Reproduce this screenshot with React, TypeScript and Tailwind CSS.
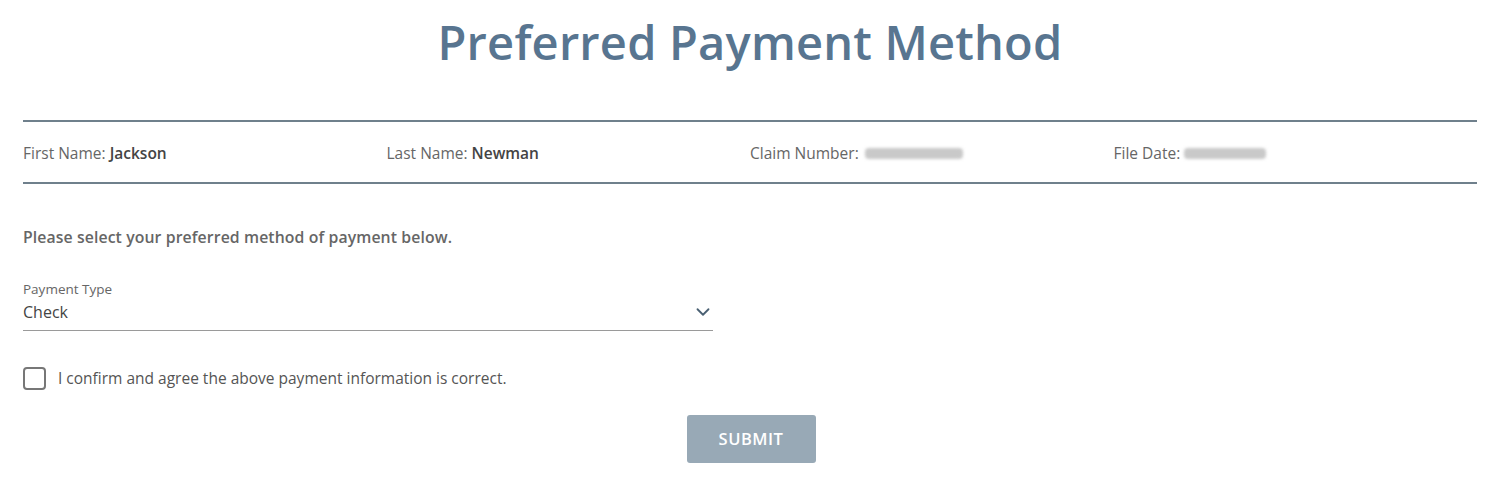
import { ChevronDown } from "lucide-react";

function Blurred({ w }: { w: number }) {
  return (
    <span className="inline-flex items-center align-middle" style={{ width: w }}>
      <span className="h-[11px] w-full bg-[#c9c9c9] blur-[1.5px] rounded-sm" />
    </span>
  );
}

export default function App() {
  return (
    <div className="min-h-[479px] bg-white px-[23px] font-['Open_Sans',sans-serif] text-[#555]">
      <h1 className="pt-[12px] text-center text-[47px] leading-[60px] font-semibold text-[#587590] tracking-[0.2px]">
        Preferred Payment Method
      </h1>

      <div className="mt-[48px] border-y-2 border-[#6f808c] h-[64px] pt-[3px] grid grid-cols-4 items-center text-[15.5px]">
        <div>
          <span className="text-[#666]">First Name: </span>
          <span className="font-semibold text-[#444]">Jackson</span>
        </div>
        <div>
          <span className="text-[#666]">Last Name: </span>
          <span className="font-semibold text-[#444]">Newman</span>
        </div>
        <div className="flex items-center">
          <span className="text-[#666] mr-[6px]">Claim Number:</span>
          <Blurred w={98} />
        </div>
        <div className="flex items-center">
          <span className="text-[#666] mr-[4px]">File Date:</span>
          <Blurred w={82} />
        </div>
      </div>

      <p className="mt-[43px] text-[15.8px] leading-[20px] font-semibold text-[#666] tracking-[0.1px]">
        Please select your preferred method of payment below.
      </p>

      <div className="mt-[33px] w-[690px] border-b border-[#9a9a9a] pb-[6px]">
        <div className="text-[13.5px] leading-[18px] text-[#666]">Payment Type</div>
        <div className="mt-[2px] flex items-center justify-between text-[16px] leading-[24px] text-[#444]">
          <span>Check</span>
          <ChevronDown className="h-[22px] w-[22px] -mr-[1px] text-[#4a6073]" strokeWidth={2} />
        </div>
      </div>

      <label className="mt-[36px] flex items-center gap-[12px]">
        <span className="h-[23px] w-[23px] rounded-[4px] border-2 border-[#777]" />
        <span className="text-[15.5px] text-[#555]">
          I confirm and agree the above payment information is correct.
        </span>
      </label>

      <div className="mt-[25px] flex justify-center">
        <button className="ml-[2px] h-[48px] w-[129px] rounded-[3px] bg-[#98a9b6] text-[16.5px] font-semibold text-white tracking-[0.5px]">
          SUBMIT
        </button>
      </div>
    </div>
  );
}
